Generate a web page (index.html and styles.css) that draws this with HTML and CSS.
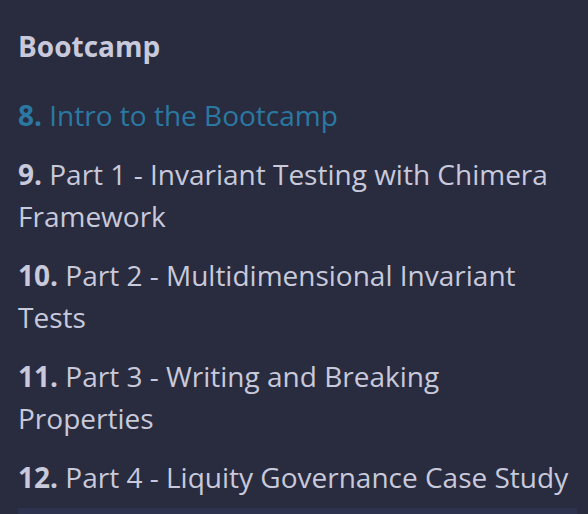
FILE: index.html
```html
<!DOCTYPE html>
<html lang="en">
  <head>
    <meta charset="UTF-8" />
    <meta name="viewport" content="width=device-width, initial-scale=1.0" />
    <title>Bootcamp</title>
    <link rel="stylesheet" href="styles.css">
  </head>
  <body>
    <nav class="sidebar">
      <ol class="chapter">
        <li class="part-title">Bootcamp</li>
        <li class="chapter-item"><a href="#" class="active"><strong>8.</strong> Intro to the Bootcamp</a></li>
        <li class="chapter-item"><a href="#"><strong>9.</strong> Part 1 - Invariant Testing with Chimera Framework</a></li>
        <li class="chapter-item"><a href="#"><strong>10.</strong> Part 2 - Multidimensional Invariant Tests</a></li>
        <li class="chapter-item"><a href="#"><strong>11.</strong> Part 3 - Writing and Breaking Properties</a></li>
        <li class="chapter-item"><a href="#"><strong>12.</strong> Part 4 - Liquity Governance Case Study</a></li>
        <li class="spacer"></li>
      </ol>
    </nav>
  </body>
</html>
```

FILE: styles.css
```css
body {
  margin: 0;
  background-color: #292c3f;
  font-family: "Open Sans", sans-serif;
  height: 514px;
  overflow: hidden;
}

.sidebar {
  padding: 15px 11px 0 18px;
  font-size: 28px;
  color: #c8c9db;
}

.chapter {
  list-style: none;
  margin: 0;
  padding: 0;
  line-height: 42px;
}

.part-title {
  font-weight: bold;
  margin: 10px 0 27px;
}

.chapter-item {
  margin-top: 17px;
}

.chapter-item a {
  color: #c8c9db;
  text-decoration: none;
}

.chapter-item a.active {
  color: #2b79a2;
}

.spacer {
  height: 6px;
  margin: 10px 0;
  background-color: #2d334f;
}
```
